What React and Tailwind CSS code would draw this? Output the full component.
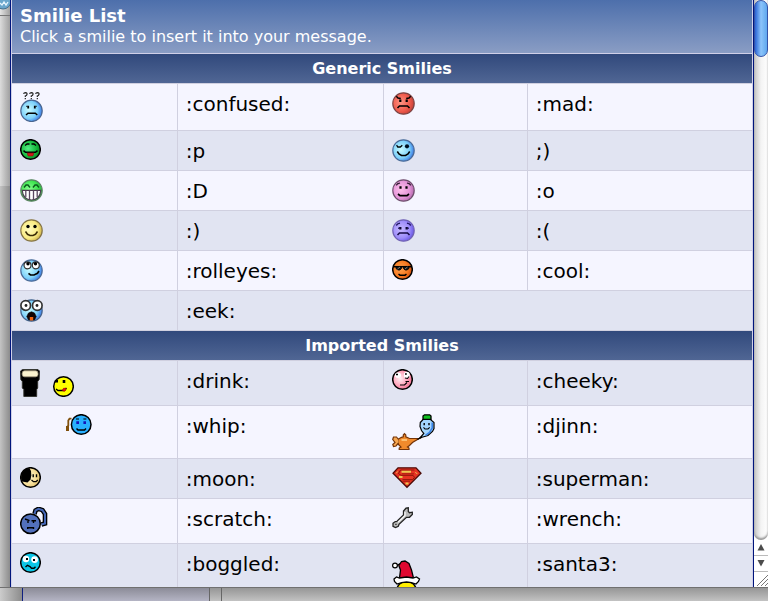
const Gradients = () => {
  const balls = [
    ["ice", "#c8fbff", "#7cd0fa", "#2a62e0"],
    ["red", "#ff9484", "#f05a4c", "#b83a34"],
    ["green", "#55ee85", "#16b83c", "#067c1c"],
    ["lime", "#8bff92", "#3fe650", "#1fa838"],
    ["yellow", "#fffbc0", "#faec84", "#c4a43c"],
    ["pink", "#ffc0ec", "#e494d8", "#a860a4"],
    ["violet", "#c8baff", "#9c8cfa", "#5c48e0"],
    ["orange", "#ffa250", "#f77a20", "#c8420a"],
    ["rose", "#fff0f4", "#ff9cb4", "#e8688c"],
    ["moon", "#fff6d4", "#f8e09a", "#d8b45c"],
  ];
  return (
    <svg className="absolute h-0 w-0" aria-hidden="true">
      <defs>
        {balls.map(([id, light, mid, dark]) => (
          <radialGradient key={id} id={id} cx="0.38" cy="0.45" r="0.68">
            <stop offset="0" stopColor={light} />
            <stop offset="0.6" stopColor={mid} />
            <stop offset="1" stopColor={dark} />
          </radialGradient>
        ))}
      </defs>
    </svg>
  );
};

const Icon = ({ w = 23, h = 23, children }) => (
  <svg
    width={w}
    height={h}
    viewBox={`0 0 ${w} ${h}`}
    className="block"
    fill="none"
    stroke="#000"
    strokeWidth="1.5"
    aria-hidden="true"
  >
    {children}
  </svg>
);

// soft-edged 23px face
const Soft = ({ fill, edge, cy = 11.5 }) => (
  <circle cx="11.5" cy={cy} r="10.7" fill={`url(#${fill})`} stroke={edge} strokeWidth="1.2" />
);

// black-outlined 21px face
const Hard = ({ fill, cx = 10.5, cy = 10.5 }) => (
  <circle cx={cx} cy={cy} r="9.8" fill={fill} strokeWidth="1.5" />
);

const Confused = () => (
  <Icon h={30}>
    <g stroke="#222" strokeWidth="1.2">
      <path d="M3.5 1.8 Q4 .6 5.5 .6 Q7.3 .8 7 2.3 Q6.8 3.3 5.3 4V5M5.3 6V7.2" />
      <path d="M9.5 1.8 Q10 .6 11.5 .6 Q13.3 .8 13 2.3 Q12.8 3.3 11.3 4V5M11.3 6V7.2" />
      <path d="M15.5 1.8 Q16 .6 17.5 .6 Q19.3 .8 19 2.3 Q18.8 3.3 17.3 4V5M17.3 6V7.2" />
    </g>
    <Soft fill="ice" edge="#4a6690" cy={18.8} />
    <path d="M6 14.3H7.6M15.4 14.3H17" stroke="#234" strokeWidth="1" />
    <path d="M8.2 13.8V16.4M14.8 13.8V16.4" strokeWidth="1.8" />
    <path d="M6 23 8 21.2H15.3L17.3 23" strokeWidth="1.4" />
  </Icon>
);

const Mad = () => (
  <Icon>
    <Soft fill="red" edge="#7d4444" />
    <path d="M4.3 4.2 6 6 8.8 6.5M18.7 4.2 17 6 14.2 6.5" strokeWidth="1.4" />
    <path d="M8.3 7.6V10M14.7 7.6V10" strokeWidth="2.2" />
    <path d="M5.5 16 7.5 14H15.5L17.5 16" strokeWidth="1.6" />
  </Icon>
);

const Tongue = () => (
  <Icon w={21} h={23}>
    <Hard fill="url(#green)" />
    <path d="M5 6.5 7 5H9.5M11.5 5H14L16 6.5" strokeWidth="1.3" />
    <path d="M3.5 11.7 5.5 13.3H15.5L17.5 11.7" strokeWidth="1.6" />
    <path d="M7 14H14L12.8 17H8.2Z" fill="#d01818" stroke="#7a1010" strokeWidth=".6" />
  </Icon>
);

const Wink = () => (
  <Icon>
    <Soft fill="ice" edge="#4c6c98" />
    <path d="M4.6 6.2 5.8 8H8.3L10.3 6.2" strokeWidth="1.3" />
    <circle cx="15" cy="7.3" r="2.1" fill="#001020" stroke="none" />
    <path d="M5.3 12.5 7 15 9.5 16.5H13.5L16 15 17.7 12.5" strokeWidth="1.6" />
  </Icon>
);

const Grin = () => (
  <Icon>
    <Soft fill="lime" edge="#5c8464" />
    <path d="M4 8.5 6 6H8L10 8.5M13 8.5 15 6H17L19 8.5" stroke="#0b5a1c" strokeWidth="1.4" />
    <path d="M2.2 11.3H20.8Q20 20.7 11.5 21Q3 20.7 2.2 11.3Z" fill="#fff" stroke="#4c3c50" strokeWidth="1.2" />
    <path d="M5.8 11.5V18M9.5 11.5V20.5M13.5 11.5V20.5M17.2 11.5V18" stroke="#5a4860" strokeWidth="1.3" />
  </Icon>
);

const Embarrassed = () => (
  <Icon>
    <Soft fill="pink" edge="#70506e" />
    <path d="M4.3 6.3 5.5 4.8 8 4M15 4 17.5 4.8 18.7 6.3" stroke="#301c30" strokeWidth="1.3" />
    <path d="M8.5 7.3V9.7M14.5 7.3V9.7" strokeWidth="2.2" />
    <path d="M6 15 8 16.7H15L17 15" strokeWidth="1.7" />
  </Icon>
);

const Happy = () => (
  <Icon>
    <Soft fill="yellow" edge="#847446" />
    <circle cx="8" cy="7.5" r="1.7" fill="#000" stroke="none" />
    <circle cx="15" cy="7.5" r="1.7" fill="#000" stroke="none" />
    <path d="M5.5 12.5 7.5 15.3 10 16.5H13L15.5 15.3 17.5 12.5" stroke="#3a2c08" strokeWidth="1.5" />
  </Icon>
);

const Sad = () => (
  <Icon>
    <Soft fill="violet" edge="#7264b4" />
    <path d="M4.3 6.5 5.5 5 8 4.2M15 4.2 17.5 5 18.7 6.5" stroke="#221660" strokeWidth="1.3" />
    <path d="M6 9.3H7.2M15.8 9.3H17" stroke="#352a80" strokeWidth="1.6" />
    <path d="M8.3 8V10.5M14.7 8V10.5" stroke="#0c0630" strokeWidth="2.3" />
    <path d="M5.5 16 7.5 14H15.5L17.5 16" stroke="#180e48" strokeWidth="1.6" />
  </Icon>
);

const RollEyes = () => (
  <Icon>
    <Soft fill="ice" edge="#4c6c98" />
    <circle cx="7.5" cy="6.3" r="3.5" fill="#fff" stroke="#333" strokeWidth="1.2" />
    <circle cx="15.8" cy="6.3" r="3.5" fill="#fff" stroke="#333" strokeWidth="1.2" />
    <circle cx="8" cy="4.7" r="1.7" fill="#000" stroke="none" />
    <circle cx="15.5" cy="4.7" r="1.7" fill="#000" stroke="none" />
    <path d="M8.5 14.3 10.5 16H14L17.5 14.3 19 12" strokeWidth="1.7" />
  </Icon>
);

const Cool = () => (
  <Icon w={21} h={23}>
    <Hard fill="url(#orange)" />
    <path d="M1 7.7H20" strokeWidth="1.5" />
    <path d="M4 7.5H9.5V9.5L8 11H6L4 9.5ZM11.5 7.5H17V9.5L15 11H13L11.5 9.5Z" fill="#111" strokeWidth=".8" />
    <path d="M5.5 10 8 8M13 10 15.5 8" stroke="#8c8c8c" strokeWidth=".9" />
    <path d="M6.5 15 8 16.2H13L14.5 15" strokeWidth="1.5" />
  </Icon>
);

const Eek = () => (
  <Icon>
    <Soft fill="ice" edge="#46648c" />
    <circle cx="5.7" cy="6.5" r="4.8" fill="#fff" stroke="#333" strokeWidth="1.7" />
    <circle cx="17.3" cy="6.5" r="4.8" fill="#fff" stroke="#333" strokeWidth="1.7" />
    <circle cx="6" cy="6.5" r="1.4" fill="#222" stroke="none" />
    <circle cx="17" cy="6.5" r="1.4" fill="#222" stroke="none" />
    <path d="M11.5 12.8 14.5 14 16.2 17.5 14.5 21H8.5L6.8 17.5 8.5 14Z" fill="#120404" strokeWidth=".6" />
    <path d="M9.8 18H13.2V21.5H9.8Z" fill="#f06410" stroke="none" />
  </Icon>
);

const Drink = () => (
  <Icon w={54} h={28}>
    <path d="M.5 2 2.5 .5H18L19.5 2 19.2 10.5 17.7 12.5V19L16.7 20.5V27.5H3.8V20.5L2.3 19V12.5L.8 10.5Z" fill="#000" stroke="#30302a" strokeWidth=".9" />
    <rect x="2.2" y="1.8" width="15.8" height="6" rx="2.4" fill="#fbf3cf" stroke="#a49b80" strokeWidth=".8" />
    <Hard fill="#ffff00" cx={43.5} cy={17.5} />
    <path d="M34.8 12.3H38M44 11V14" strokeWidth="2.6" />
    <path d="M36 20 38 21.5H44L46.5 19" strokeWidth="1.4" />
    <path d="M42.2 21.5 43.5 19.3H46V21L44.5 22.3Z" fill="#e81010" stroke="#900" strokeWidth=".6" />
  </Icon>
);

const Cheeky = () => (
  <Icon w={21} h={23}>
    <Hard fill="url(#rose)" />
    <ellipse cx="6" cy="6.3" rx="3" ry="2.7" fill="#fff" stroke="none" />
    <ellipse cx="14.8" cy="6" rx="3" ry="3.2" fill="#fff" stroke="none" />
    <path d="M4 5.5H6M13 5H14.8" strokeWidth="1.4" />
    <path d="M13 9 15.5 9.5 17 7.5M13.5 12.5H17M8 16H12.5L15 13.5" strokeWidth="1.1" />
  </Icon>
);

const Whip = () => (
  <Icon w={72} h={36}>
    <path d="M51.5 4.7H49.5L48.3 6.5V12M47.8 11.5V17" stroke="#80500c" strokeWidth="1.8" />
    <path d="M47.5 12V17" stroke="#80500c" strokeWidth="3" />
    <Hard fill="#28b0ff" cx={61.2} />
    <path d="M56 5H59M63.4 5H66.4" strokeWidth="1.2" />
    <path d="M56.3 8.7H59M63.4 8.7H66" stroke="#1414b8" strokeWidth="2.8" />
    <path d="M56.5 14.5 58 16H64.5L66 14.5" strokeWidth="1.5" />
  </Icon>
);

const Djinn = () => (
  <Icon w={43} h={36}>
    <path d="M28.3 8.5 31 5.5H38.5L42 8.5V14.5L40.5 17.5 36 21.5 30 23.3 27.5 24.5 31.8 19.5 29.5 16.5 28 12.5Z" fill="#a4d6ff" strokeWidth="1.2" />
    <path d="M40.2 8.5V14L37.5 18.5 33.5 21.3" stroke="#3a84e8" strokeWidth="1.6" />
    <path d="M31 2 32.5 .8H37.7L39 2V5.3H31Z" fill="#10c020" strokeWidth="1.3" />
    <path d="M32.2 9V11.2M37 9V11.2" strokeWidth="1.4" />
    <path d="M31.5 13.3 33 15H36L37.7 13.3" strokeWidth="1.1" />
    <path d="M6.5 25 9.5 23.3 11.3 22.8V21L12.5 19.7 13.8 21V22.8L17.5 24.5 27 24.5 20.5 28.5 17.5 31.5 15.5 33 17 34V35.5H7.2V34L9 33 6 30Z" fill="#f08a2c" stroke="#743408" strokeWidth="1.2" />
    <path d="M6.5 29 4 32 1.5 32.5 .8 30.5 3 28.5 .7 25.5 1.5 23 4.5 23 6.5 25.5" fill="#f6a650" stroke="#743408" strokeWidth="1.2" />
    <path d="M9.5 26H15" stroke="#ffd08a" strokeWidth="1.5" />
    <path d="M25.5 25.5 29.5 23" strokeWidth="1.2" />
  </Icon>
);

const Moon = () => (
  <Icon w={21} h={23}>
    <Hard fill="url(#moon)" />
    <path d="M9.5 1.2 5 2.2 1.5 6 1 11 2 14.5 7.5 15.5 10.5 12.5 11.3 8.5 11 4Z" fill="#000" stroke="none" />
    <path d="M13.2 7.3V10.3M16.5 7.3V10.3" strokeWidth="1.4" />
    <path d="M11.5 13 13.5 14.7H16L17.8 13" strokeWidth="1.3" />
  </Icon>
);

const Superman = () => (
  <Icon w={30} h={23}>
    <path d="M6 .8H24L29 6.3 15 20.3 1 6.3Z" fill="#e63222" stroke="#4c0c08" strokeWidth="1.3" />
    <path d="M22.5 3H8.5L6.5 6.5 9 8.3H21L22.5 10.3 20.5 12.7H10.5" stroke="#8c1408" strokeWidth="1" />
    <path d="M10 6.8H22M10.5 14.3H18" stroke="#a81c10" strokeWidth="1" />
    <path d="M9.5 4.8H19M7 10H10.5M13.5 16.5H16.5" stroke="#ecc850" strokeWidth="1.9" />
    <path d="M5.5 4.5 4.3 6.3M23.3 5 25.3 7" stroke="#e8c050" strokeWidth="1" />
  </Icon>
);

const Scratch = () => (
  <Icon w={28} h={28}>
    <path d="M14.5 7 15.5 3.5 18.5 1.8 22.5 3.2 25 7V16.5L21.5 17.5" strokeWidth="4.6" />
    <path d="M14.5 7 15.5 3.5 18.5 1.8 22.5 3.2 25 7V16.5L21.5 17.5" stroke="#4466b4" strokeWidth="2" />
    <Hard fill="#5270bc" cy={16.7} />
    <path d="M5 12 9.5 13.7M11.5 13.7H16" strokeWidth="1.4" />
    <path d="M8 14V16M13.5 14V16M7.7 22V20.7H13.5V22" strokeWidth="1.4" />
  </Icon>
);

const Wrench = () => (
  <Icon w={21} h={23}>
    <path d="M1 16.3 3.3 14.5 5 14.3 11.5 8V4L14 1.2 16.3 .8V4.5L17.5 5.7 20.3 5.2V7.5L17.5 10.3H14.5L7 17.3 6.3 19.3 3.5 20.5 1 19.3Z" fill="#bababa" stroke="#222" strokeWidth="1.3" />
    <path d="M6 15.3 13 8.5V5" stroke="#f6f6f6" strokeWidth="1.4" />
    <path d="M3.3 17.3H4.6" stroke="#222" strokeWidth="1.3" />
  </Icon>
);

const Boggled = () => (
  <Icon w={21} h={23}>
    <Hard fill="#0cc6e6" />
    <circle cx="6" cy="7" r="3.2" fill="#fff" stroke="none" />
    <circle cx="14.6" cy="7.6" r="3.4" fill="#fff" stroke="none" />
    <path d="M6 7H8M13 8H15" strokeWidth="2" />
    <path d="M5.5 15 7.5 13.3 10 14.5 11.5 16.3H14L15.5 14.7" strokeWidth="1.4" />
  </Icon>
);

const Santa = () => (
  <Icon w={30} h={44}>
    <Hard fill="#ffee00" cx={14.5} cy={39} />
    <path d="M7.5 26 8.5 18 6.8 13.5 9.5 9.5 13 9 17 11.5 19.5 18 21.5 26Z" fill="#e00830" strokeWidth="1.3" />
    <path d="M2 27 4.5 25 7.5 26 14.5 25 21 26 24.5 25 27.5 27 26.5 29.5 24 32 19.5 30.7 14.5 30 9.5 30.7 5 32 2.5 29.5Z" fill="#fff" strokeWidth="1.3" />
    <circle cx="3" cy="13.5" r="2.4" fill="#fff" strokeWidth="1.2" />
    <path d="M5.5 13 8.5 11.5" strokeWidth="1.2" />
  </Icon>
);

const groups = [
  {
    title: "Generic Smilies",
    rows: [
      [[":confused:", Confused], [":mad:", Mad]],
      [[":p", Tongue], [";)", Wink]],
      [[":D", Grin], [":o", Embarrassed]],
      [[":)", Happy], [":(", Sad]],
      [[":rolleyes:", RollEyes], [":cool:", Cool]],
      [[":eek:", Eek]],
    ],
    shaded: 1,
  },
  {
    title: "Imported Smilies",
    rows: [
      [[":drink:", Drink], [":cheeky:", Cheeky]],
      [[":whip:", Whip], [":djinn:", Djinn]],
      [[":moon:", Moon], [":superman:", Superman]],
      [[":scratch:", Scratch], [":wrench:", Wrench]],
      [[":boggled:", Boggled], [":santa3:", Santa]],
    ],
    shaded: 0,
  },
];

const Smilie = ({ code, Picture, last, wide }) => (
  <>
    <td className="border-r border-b border-[#d0d0e0] p-2 align-top">
      <button type="button" aria-label={code} className="block cursor-pointer">
        <Picture />
      </button>
    </td>
    <td
      colSpan={wide ? 3 : 1}
      className={`border-b border-[#d0d0e0] px-2 pt-2 align-top ${last ? "" : "border-r"}`}
    >
      {code}
    </td>
  </>
);

const SmilieTable = () => (
  <table className="w-full table-fixed border-separate border-spacing-0 text-xl leading-6 text-black">
    <colgroup>
      <col className="w-[22.4%]" />
      <col className="w-[27.9%]" />
      <col className="w-[19.4%]" />
      <col />
    </colgroup>
    {groups.map(({ title, rows, shaded }) => (
      <tbody key={title}>
        <tr>
          <th
            colSpan={4}
            className="h-[30px] border-b border-[#d0d0e0] bg-linear-to-b from-[#31497c] to-[#506694] p-0 text-base font-bold text-white"
          >
            {title}
          </th>
        </tr>
        {rows.map((row, i) => (
          <tr key={row[0][0]} className={i % 2 === shaded ? "bg-[#e1e4f2]" : "bg-[#f5f5ff]"}>
            {row.map(([code, Picture], n) => (
              <Smilie key={code} code={code} Picture={Picture} last={n === 1 || row.length === 1} wide={row.length === 1} />
            ))}
          </tr>
        ))}
      </tbody>
    ))}
  </table>
);

const Scrollbar = () => (
  <aside className="flex w-[14px] shrink-0 flex-col bg-white">
    <div className="flex-1 rounded-b-full bg-linear-to-r from-[#c4c4c4] via-[#f4f4f4] to-white shadow-[inset_0_-2px_2px_#999]">
      <div className="h-[57px] rounded-full border border-[#3554a8] bg-linear-to-r from-[#2c62d4] via-[#8cc4fa] to-[#5ea8ee]" />
    </div>
    <button type="button" aria-label="Scroll up" className="flex h-4 items-center justify-center border-b border-[#bbb]">
      <svg width="8" height="7" viewBox="0 0 8 7" fill="#4c4c4c">
        <path d="M4 0 7.5 6.5H.5Z" />
      </svg>
    </button>
    <button type="button" aria-label="Scroll down" className="flex h-4 items-center justify-center border-b border-[#bbb]">
      <svg width="8" height="7" viewBox="0 0 8 7" fill="#4c4c4c">
        <path d="M4 6.5 7.5 0H.5Z" />
      </svg>
    </button>
    <svg width="14" height="15" viewBox="0 0 14 15" stroke="#777" strokeWidth="1">
      <path d="M3 14 14 3M7 14 14 7M11 14 14 11" />
    </svg>
  </aside>
);

const Backdrop = () => (
  <div className="flex w-[10px] shrink-0 flex-col">
    <div className="h-4 border-b border-[#777] bg-linear-to-r from-[#e4e4e4] to-[#a0a0a0]">
      <svg width="10" height="14" viewBox="0 0 10 14" className="block" fill="none">
        <circle cx="3" cy="1" r="8" fill="#6aa6cc" stroke="#47718e" />
        <path d="M0 3 2 5 4 2 6 5 8 2" stroke="#e8f6ff" strokeWidth="1.3" />
      </svg>
    </div>
    <div className="h-[170px] bg-linear-to-r from-[#dcdcdc] to-[#a0a0a0]" />
    <div className="flex-1 bg-linear-to-r from-[#c4c4c4] to-[#8c8c8c]" />
  </div>
);

const App = () => {
  return (
    <div className="flex h-screen flex-col overflow-hidden bg-[#b0b0b0] font-['DejaVu_Sans',sans-serif]">
      <Gradients />
      <div className="flex min-h-0 flex-1">
        <Backdrop />
        <main className="min-w-0 flex-1 overflow-hidden border-x border-[#00157c]">
          <div className="border-x border-[#d0d0e8]">
            <header className="border-b border-[#d0d0e8] bg-linear-to-b from-[#4d6fab] to-[#8a9dc4] px-2 py-1.5 text-white">
              <h1 className="text-lg leading-5 font-bold">Smilie List</h1>
              <p className="text-base leading-[21px]">Click a smilie to insert it into your message.</p>
            </header>
            <SmilieTable />
          </div>
        </main>
        <Scrollbar />
      </div>
      <footer className="flex h-[14px] shrink-0 border-t border-[#707070] bg-linear-to-b from-[#969696] to-[#c2c2c2]">
        <div className="w-[22px] bg-linear-to-r from-[#cccccc] to-[#8c8c8c]" />
        <div className="w-[188px] border-x border-l-[#102080] border-r-[#666] bg-linear-to-b from-[#8c8c98] to-[#b4b4c4]" />
        <div className="w-3 border-r border-[#666]" />
      </footer>
    </div>
  );
};

export default App;
